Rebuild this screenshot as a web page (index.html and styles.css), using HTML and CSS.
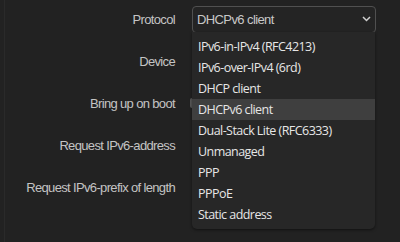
FILE: index.html
```html
<!DOCTYPE html>
<html>
<head>
<meta charset="utf-8">
<link rel="stylesheet" href="styles.css">
</head>
<body>
<div class="page">
  <div class="form">
    <div class="row">
      <div class="label">Protocol</div>
      <div class="field">
        <div class="select">
          <span class="select-text">DHCPv6 client</span>
          <svg class="chev" width="9" height="6" viewBox="0 0 9 6"><path d="M1 1 L4.5 4.5 L8 1" fill="none" stroke="#d0d0d0" stroke-width="1.5"/></svg>
        </div>
      </div>
    </div>
    <div class="row">
      <div class="label">Device</div>
      <div class="field"></div>
    </div>
    <div class="row">
      <div class="label">Bring up on boot</div>
      <div class="field"><span class="check"></span></div>
    </div>
    <div class="row">
      <div class="label">Request IPv6-address</div>
      <div class="field"></div>
    </div>
    <div class="row">
      <div class="label">Request IPv6-prefix of length</div>
      <div class="field"></div>
    </div>
  </div>
  <ul class="menu">
    <li>IPv6-in-IPv4 (RFC4213)</li>
    <li>IPv6-over-IPv4 (6rd)</li>
    <li>DHCP client</li>
    <li class="active">DHCPv6 client</li>
    <li>Dual-Stack Lite (RFC6333)</li>
    <li>Unmanaged</li>
    <li>PPP</li>
    <li>PPPoE</li>
    <li>Static address</li>
  </ul>
</div>
</body>
</html>
```
FILE: styles.css
```css
html, body {
  margin: 0;
  padding: 0;
  background: #222222;
  width: 400px;
  height: 242px;
  overflow: hidden;
}
.page {
  position: relative;
  width: 400px;
  height: 242px;
  border-left: 1px solid #2a2a2a;
  margin-left: 4px;
  box-sizing: border-box;
}
.form {
  display: flex;
  flex-direction: column;
  gap: 4px;
}
.row {
  display: grid;
  grid-template-columns: 170px 1fr;
  column-gap: 17px;
  height: 38px;
  align-items: center;
}
.label {
  text-align: right;
  font-family: "Liberation Sans", Arial, sans-serif;
  font-size: 13px;
  letter-spacing: -0.65px;
  color: #c4c4c4;
}
.field {
  display: flex;
  align-items: center;
  height: 100%;
}
.select {
  box-sizing: border-box;
  width: 184px;
  height: 27px;
  border: 1px solid #505050;
  border-radius: 4px;
  background: #242424;
  display: flex;
  align-items: center;
  justify-content: space-between;
  padding: 0 4px 0 4px;
  font-family: "Liberation Sans", Arial, sans-serif;
  font-size: 13px;
  letter-spacing: -0.6px;
  color: #c8c8c8;
}
.check {
  display: block;
  width: 14px;
  height: 10px;
  margin-left: -2px;
  background: #5a5a5a;
  border-radius: 2px;
}
.menu {
  position: absolute;
  left: 187px;
  top: 32px;
  width: 183px;
  height: 197px;
  box-sizing: border-box;
  margin: 0;
  padding: 4px 0 0;
  list-style: none;
  background: #272727;
  border-radius: 0 0 5px 5px;
  box-shadow: 0 1px 3px rgba(0,0,0,0.5);
  font-family: "Open Sans", "Noto Sans", sans-serif;
  font-size: 12.5px;
  letter-spacing: -0.55px;
  color: #e6e6e6;
}
.menu li {
  height: 21px;
  line-height: 21px;
  padding-left: 6px;
}
.menu li.active {
  background: #3f3f3f;
}
```
